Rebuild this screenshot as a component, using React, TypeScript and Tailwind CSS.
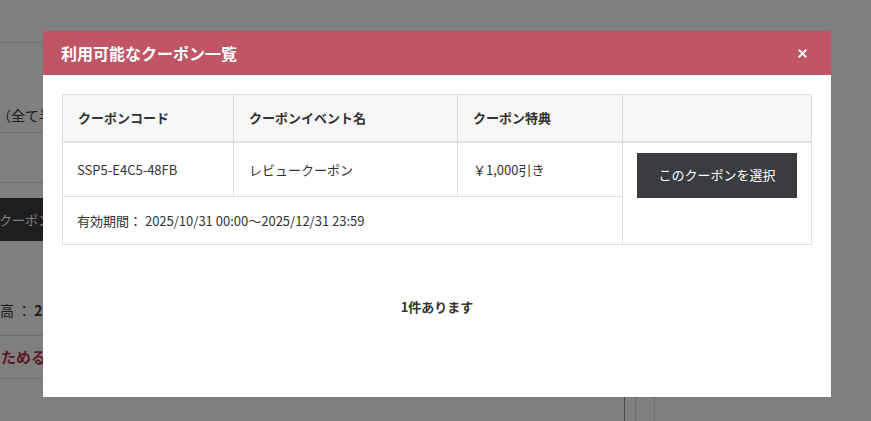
import { X } from "lucide-react";

const font = {
  fontFamily: '"Noto Sans CJK JP", "Noto Sans", sans-serif',
};

function BackgroundPage() {
  return (
    <div className="relative h-[421px] w-[871px] overflow-hidden bg-white text-[13px] text-[#333]">
      <div className="flex w-[300px] flex-col">
        <div className="h-[43px] border-b border-[#dcdcdc]" />
        <div className="flex h-[90px] items-end border-b border-[#dcdcdc] pb-[6px] -ml-[3px] text-[14px]">
          （全て半角英数字）
        </div>
        <div className="h-[50px] border-b border-[#dcdcdc]" />
        <div className="mt-[15px] flex h-[43px] w-[160px] -ml-[60px] items-center bg-[#3c3c3c] pl-[33px] text-[13px] text-white">
          このクーポンを使う
        </div>
        <div className="flex h-[95px] items-end whitespace-nowrap border-b border-[#dcdcdc] pb-[14px] -ml-[14px] text-[14px]">
          残高 ：<span className="ml-[3px] font-bold">2,000円</span>
        </div>
        <div className="flex h-[43px] items-center whitespace-nowrap border-b border-[#dcdcdc] -ml-[74px] text-[15px] font-bold text-[#b3384a]">
          ポイントをためる
        </div>
      </div>
      <div className="absolute left-[624px] top-[380px] h-[60px] w-px bg-[#999]" />
      <div className="absolute left-[635px] top-[380px] h-[60px] w-px bg-[#ddd]" />
      <div className="absolute left-[654px] top-[380px] h-[60px] w-px bg-[#ddd]" />
    </div>
  );
}

function CouponModal() {
  return (
    <div className="absolute left-[43px] top-[31px] flex h-[366px] w-[788px] flex-col bg-white">
      <div className="flex h-[44px] items-center justify-between bg-[#bf5565] pl-[18px] pr-[22px]">
        <h2 className="text-[16px] font-bold text-white">利用可能なクーポン一覧</h2>
        <X className="h-[13px] w-[13px] text-white" strokeWidth={3.5} />
      </div>
      <div className="px-[19px] pt-[19px]">
        <table className="w-[749px] table-fixed border-collapse text-[13px] text-[#333]">
          <colgroup>
            <col className="w-[171px]" />
            <col className="w-[224px]" />
            <col className="w-[165px]" />
            <col className="w-[189px]" />
          </colgroup>
          <thead>
            <tr className="h-[47px] bg-[#f7f7f7] font-bold">
              <th className="border border-b-2 border-[#dddddd] border-b-[#e3e3e3] px-[15px] text-left font-bold">
                クーポンコード
              </th>
              <th className="border border-b-2 border-[#dddddd] border-b-[#e3e3e3] px-[15px] text-left font-bold">
                クーポンイベント名
              </th>
              <th className="border border-b-2 border-[#dddddd] border-b-[#e3e3e3] px-[15px] text-left font-bold">
                クーポン特典
              </th>
              <th className="border border-b-2 border-[#dddddd] border-b-[#e3e3e3]" />
            </tr>
          </thead>
          <tbody>
            <tr className="h-[55px]">
              <td className="border border-[#dddddd] px-[14px]">SSP5-E4C5-48FB</td>
              <td className="border border-[#dddddd] px-[15px]">レビュークーポン</td>
              <td className="border border-[#dddddd] px-[15px]">￥1,000引き</td>
              <td rowSpan={2} className="border border-[#dddddd] px-[14px] pt-[10px] align-top">
                <button className="flex h-[45px] w-[160px] items-center justify-center bg-[#3a3c3f] text-[13px] text-white">
                  このクーポンを選択
                </button>
              </td>
            </tr>
            <tr className="h-[48px]">
              <td colSpan={3} className="border border-[#dddddd] px-[14px]">
                有効期間： 2025/10/31 00:00～2025/12/31 23:59
              </td>
            </tr>
          </tbody>
        </table>
        <p className="mt-[52px] text-center text-[13px] font-bold text-[#333]">1件あります</p>
      </div>
    </div>
  );
}

export default function App() {
  return (
    <div className="relative h-[421px] w-[871px] overflow-hidden" style={font}>
      <BackgroundPage />
      <div className="absolute inset-0 bg-black/50" />
      <CouponModal />
    </div>
  );
}
